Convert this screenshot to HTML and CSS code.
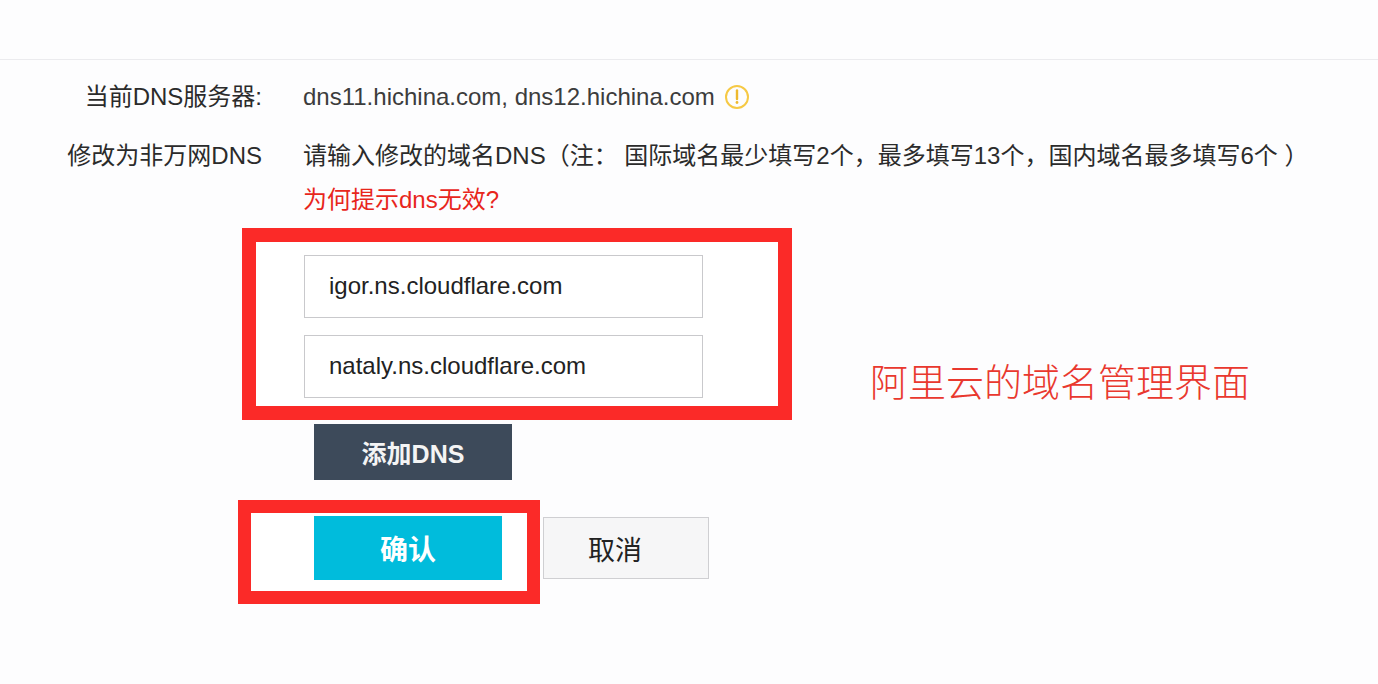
FILE: index.html
```html
<!DOCTYPE html>
<html lang="zh-CN">
<head>
  <meta charset="UTF-8" />
  <meta name="viewport" content="width=device-width, initial-scale=1.0"/>
  <title>修改DNS</title>
  <link rel="stylesheet" href="styles.css">
</head>
<body>
  <div class="top-bar"></div>

  <div class="row row-current">
    <div class="label">当前DNS服务器:</div>
    <div class="value">
      <span>dns11.hichina.com, dns12.hichina.com</span>
      <svg class="warn-icon" viewBox="0 0 26 26">
        <circle cx="13" cy="13" r="11" fill="none" stroke="#f6c945" stroke-width="2"/>
        <path d="M13 6.5v8.5" stroke="#eeb92e" stroke-width="2.4" stroke-linecap="round"/>
        <circle cx="13" cy="18.5" r="1.4" fill="#eeb92e"/>
      </svg>
    </div>
  </div>

  <div class="row row-change">
    <div class="label">修改为非万网DNS</div>
    <div class="value">
      <div class="hint">请输入修改的域名DNS（注： 国际域名最少填写2个，最多填写13个，国内域名最多填写6个 ）</div>
      <div class="help-link">为何提示dns无效?</div>
    </div>
  </div>

  <div class="frame frame-inputs">
    <div class="dns-input">igor.ns.cloudflare.com</div>
    <div class="dns-input">nataly.ns.cloudflare.com</div>
  </div>

  <button class="btn btn-add">添加DNS</button>

  <div class="actions">
    <div class="frame frame-confirm">
      <button class="btn btn-confirm">确认</button>
    </div>
    <button class="btn btn-cancel">取消</button>
  </div>

  <div class="note">阿里云的域名管理界面</div>
</body>
</html>
```

FILE: styles.css
```css
* {
  box-sizing: border-box;
}
body {
  margin: 0;
  height: 684px;
  overflow: hidden;
  background: #fdfdfe;
  color: #2b2b2b;
  font-family: "Liberation Sans", "Noto Sans CJK SC", sans-serif;
  font-size: 24px;
}
.top-bar {
  height: 60px;
  border-bottom: 1px solid #ebebee;
}
.row {
  display: flex;
  line-height: 32px;
}
.row-current {
  padding-top: 21px;
}
.row-change {
  padding-top: 27px;
}
.label {
  width: 262px;
  text-align: right;
  flex-shrink: 0;
}
.value {
  margin-left: 41px;
  white-space: nowrap;
}
.row-current .value {
  display: flex;
  align-items: center;
  color: #3c3c3c;
}
.warn-icon {
  width: 26px;
  height: 26px;
  margin-left: 9px;
}
.help-link {
  margin-top: 12px;
  color: #e8261c;
}
.frame {
  border: 14px solid #fb2a28;
  background: #fff;
}
.frame-inputs {
  width: 550px;
  height: 192px;
  margin: 12px 0 0 242px;
  padding: 13px 0 0 48px;
}
.dns-input {
  width: 399px;
  height: 63px;
  margin-bottom: 17px;
  padding-left: 24px;
  border: 1px solid #c9c9cc;
  background: #fff;
  color: #222;
  line-height: 60px;
}
.btn {
  display: block;
  border: 0;
  padding: 0;
  font-family: inherit;
  font-size: 24px;
}
.btn-add {
  width: 198px;
  height: 56px;
  margin: 4px 0 0 314px;
  background: #3d4a5a;
  color: #f4f4f4;
  font-size: 25px;
  font-weight: bold;
}
.actions {
  display: flex;
  align-items: center;
  margin: 20px 0 0 238px;
}
.frame-confirm {
  width: 302px;
  height: 104px;
  border-width: 13px;
  padding: 3px 0 0 63px;
}
.btn-confirm {
  width: 188px;
  height: 64px;
  background: #00bcdc;
  color: #fff;
  font-size: 28px;
  font-weight: bold;
}
.btn-cancel {
  width: 166px;
  height: 62px;
  margin-left: 3px;
  margin-top: -8px;
  padding-right: 22px;
  border: 1px solid #cfcfd2;
  background: #f6f6f7;
  color: #222;
  font-size: 27px;
}
/* annotation pasted over the screenshot */
.note {
  position: absolute;
  left: 870px;
  top: 352px;
  color: #e9382e;
  font-size: 38px;
  font-weight: 300;
  white-space: nowrap;
}
```
